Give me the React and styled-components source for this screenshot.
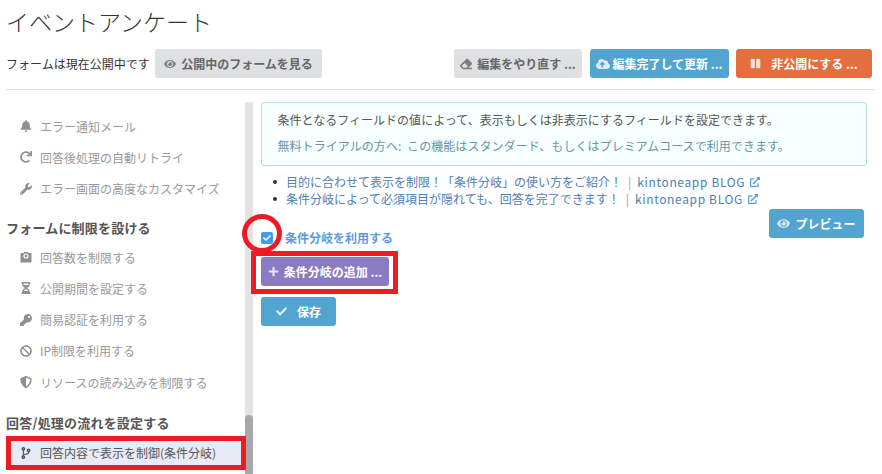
import React from "react";
import styled, { createGlobalStyle } from "styled-components";
import {
  FaBell, FaRedo, FaWrench, FaHourglassHalf, FaKey, FaBan, FaShieldAlt,
  FaCodeBranch, FaEye, FaEraser, FaCloudUploadAlt, FaPause, FaPlus, FaCheck, FaExternalLinkAlt,
} from "react-icons/fa";

const Global = createGlobalStyle`
  html, body { margin: 0; padding: 0; background: #fff; }
  body { font-family: "Noto Sans CJK JP", "Noto Sans", sans-serif; color: #333; overflow: hidden; }
`;

const Page = styled.div`
  position: relative;
  width: 882px;
  height: 474px;
  overflow: hidden;
`;

const Header = styled.header`
  margin: 0 7px 0 6px;
  height: 90px;
  border-bottom: 1px solid #ddd;
  box-sizing: border-box;
`;

const Title = styled.h1`
  margin: 0;
  padding-top: 4px;
  height: 49px;
  box-sizing: border-box;
  font-size: 23px;
  line-height: 34px;
  font-weight: 300;
  color: #333;
`;

const StatusRow = styled.div`
  display: flex;
  align-items: center;
  height: 29px;
  padding-right: 3px;
`;

const StatusText = styled.span`
  font-size: 12px;
  margin-right: 5px;
  width: 144px;
  white-space: nowrap;
`;

const Spacer = styled.div`
  flex: 1;
`;

const colors = {
  gray: ["#dfe0e2", "#666"],
  blue: ["#52a5d0", "#fff"],
  orange: ["#e36f3e", "#fff"],
  purple: ["#8b7bc2", "#fff"],
};

const Button = styled.div`
  display: flex;
  align-items: center;
  justify-content: center;
  gap: ${(p) => p.$gap ?? 5}px;
  box-sizing: border-box;
  width: ${(p) => p.$w}px;
  height: 29px;
  margin-left: ${(p) => p.$ml ?? 0}px;
  border-radius: 3px;
  background: ${(p) => colors[p.$c][0]};
  color: ${(p) => colors[p.$c][1]};
  font-size: 12px;
  font-weight: 700;
  white-space: nowrap;
  svg { flex: none; opacity: 0.8; }
`;

const Body = styled.div`
  display: flex;
  height: 384px;
`;

const Sidebar = styled.nav`
  width: 245px;
  flex: none;
  padding: 20.5px 0 0 6px;
  box-sizing: border-box;
`;

const Item = styled.div`
  display: flex;
  align-items: center;
  height: 31.3px;
  padding-left: 14px;
  font-size: 12px;
  color: #999;
  white-space: nowrap;
  svg { width: 12px; height: 12px; margin-right: 8px; flex: none; color: #8f8f8f; }
`;

const ActiveItem = styled(Item)`
  height: 24px;
  margin-top: 6px;
  color: #555;
  background: #e8eaf6;
  svg { color: #555; }
`;

const Heading = styled.h3`
  margin: 0;
  padding-top: ${(p) => p.$top}px;
  height: ${(p) => p.$h}px;
  font-size: 13px;
  line-height: 22px;
  font-weight: 700;
  letter-spacing: 0.2px;
  color: #555;
  white-space: nowrap;
`;

const Track = styled.div`
  position: relative;
  width: 8px;
  margin-top: 12px;
  height: 372px;
  background: #e3e3e3;
  flex: none;
`;

const Thumb = styled.div`
  position: absolute;
  left: 0;
  right: 0;
  top: 313px;
  bottom: 0;
  border-radius: 4px 4px 0 0;
  background: #a8a8a8;
`;

const Main = styled.main`
  flex: 1;
  padding: 12px 15px 0 8px;
  min-width: 0;
`;

const Notice = styled.div`
  box-sizing: border-box;
  height: 64px;
  padding: 4px 15px 0 15.5px;
  border: 1px solid #b9dfe6;
  border-radius: 3px;
  background: #f8ffff;
  font-size: 12px;
  letter-spacing: -0.16px;
  line-height: 26px;
  color: #555;
  p { margin: 0; white-space: nowrap; letter-spacing: 0.02px; }
  p + p { color: #6496a8; letter-spacing: 0.06px; word-spacing: 3px; }
`;

const Links = styled.ul`
  margin: 7px 0 0;
  padding: 0 0 0 12px;
  list-style: none;
`;

const LinkRow = styled.li`
  display: flex;
  align-items: center;
  height: 17px;
  font-size: 12px;
  color: #4d80b8;
  white-space: nowrap;
  &::before {
    content: "";
    width: 4px;
    height: 4px;
    border-radius: 50%;
    background: #333;
    margin-right: 9px;
  }
  svg { width: 10px; height: 10px; margin-left: 5px; color: #5aa0d0; }
`;

const Pipe = styled.span`
  color: #c08ab8;
  margin: 0 6px 0 6px;
`;

const Blog = styled.span`
  letter-spacing: 0.65px;
`;

const PreviewRow = styled.div`
  display: flex;
  justify-content: flex-end;
  margin: 2px 3px 0 0;
`;

const CheckRow = styled.div`
  display: flex;
  align-items: center;
  gap: 12px;
  margin-top: -9px;
  height: 17px;
  font-size: 12px;
  font-weight: 700;
  color: #5b9be0;
  white-space: nowrap;
`;

const Box = styled.span`
  display: flex;
  align-items: center;
  justify-content: center;
  width: 12px;
  height: 12px;
  margin-top: 1px;
  border-radius: 2px;
  background: #429bf2;
  color: #fff;
  svg { width: 8px; height: 8px; }
`;

const Actions = styled.div`
  display: flex;
  flex-direction: column;
  align-items: flex-start;
  gap: 11px;
  margin-top: 11px;
`;

const Ring = styled.div`
  position: absolute;
  left: 242px;
  top: 214px;
  width: 40px;
  height: 39px;
  box-sizing: border-box;
  border: 5px solid #ed1c24;
  border-radius: 50%;
`;

const Frame = styled.div`
  position: absolute;
  left: ${(p) => p.$x}px;
  top: ${(p) => p.$y}px;
  width: ${(p) => p.$w}px;
  height: ${(p) => p.$h}px;
  box-sizing: border-box;
  border: 5px solid #ed1c24;
`;

// 回答数の制限アイコン (カメラ風の箱)
function LimitIcon() {
  return (
    <svg viewBox="0 0 12 12">
      <path fill="currentColor" d="M1.5 2h2l.6 -1h3.8l.6 1h2c.6 0 1 .4 1 1v7.5c0 .6-.4 1-1 1h-9c-.6 0-1-.4-1-1V3c0-.6.4-1 1-1z" />
      <circle cx="6" cy="5" r="2.6" fill="#fff" />
      <circle cx="6" cy="5" r="1.4" fill="currentColor" />
    </svg>
  );
}

export default function App() {
  return (
    <Page>
      <Global />
      <Header>
        <Title>イベントアンケート</Title>
        <StatusRow>
          <StatusText>フォームは現在公開中です</StatusText>
          <Button $c="gray" $w={167}><FaEye size={12} />公開中のフォームを見る</Button>
          <Spacer />
          <Button $c="gray" $w={128}><FaEraser size={12} />編集をやり直す ...</Button>
          <Button $c="blue" $w={139} $ml={8} $gap={2}><FaCloudUploadAlt size={14} />編集完了して更新 ...</Button>
          <Button $c="orange" $w={136} $ml={7} $gap={10}><FaPause size={11} />非公開にする ...</Button>
        </StatusRow>
      </Header>
      <Body>
        <Sidebar>
          <Item><FaBell />エラー通知メール</Item>
          <Item><FaRedo />回答後処理の自動リトライ</Item>
          <Item><FaWrench />エラー画面の高度なカスタマイズ</Item>
          <Heading $top={13} $h={24}>フォームに制限を設ける</Heading>
          <Item><LimitIcon />回答数を制限する</Item>
          <Item><FaHourglassHalf />公開期間を設定する</Item>
          <Item><FaKey />簡易認証を利用する</Item>
          <Item><FaBan />IP制限を利用する</Item>
          <Item><FaShieldAlt />リソースの読み込みを制限する</Item>
          <Heading $top={14} $h={23}>回答/処理の流れを設定する</Heading>
          <ActiveItem><FaCodeBranch />回答内容で表示を制御(条件分岐)</ActiveItem>
        </Sidebar>
        <Track><Thumb /></Track>
        <Main>
          <Notice>
            <p>条件となるフィールドの値によって、表示もしくは非表示にするフィールドを設定できます。</p>
            <p>無料トライアルの方へ: この機能はスタンダード、もしくはプレミアムコースで利用できます。</p>
          </Notice>
          <Links>
            <LinkRow>目的に合わせて表示を制限！「条件分岐」の使い方をご紹介！<Pipe>|</Pipe><Blog>kintoneapp BLOG</Blog><FaExternalLinkAlt /></LinkRow>
            <LinkRow>条件分岐によって必須項目が隠れても、回答を完了できます！<Pipe>|</Pipe><Blog>kintoneapp BLOG</Blog><FaExternalLinkAlt /></LinkRow>
          </Links>
          <PreviewRow><Button $c="blue" $w={95}><FaEye size={13} />プレビュー</Button></PreviewRow>
          <CheckRow><Box><FaCheck /></Box>条件分岐を利用する</CheckRow>
          <Actions>
            <Button $c="purple" $w={128}><FaPlus size={11} />条件分岐の追加 ...</Button>
            <Button $c="blue" $w={75} $gap={10}><FaCheck size={11} />保存</Button>
          </Actions>
        </Main>
      </Body>
      <Ring />
      <Frame $x={251} $y={251} $w={147} $h={43} />
      <Frame $x={6} $y={436} $w={240} $h={34} />
    </Page>
  );
}
